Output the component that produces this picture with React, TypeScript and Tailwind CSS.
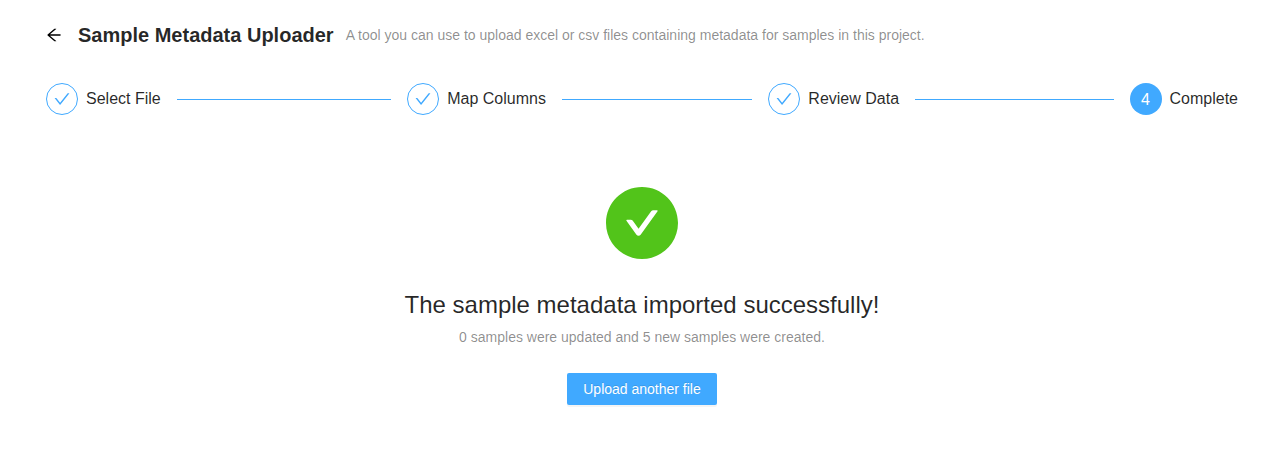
import React from "react";

const CHECK =
  "M912 190h-69.9c-9.8 0-19.1 4.5-25.1 12.2L404.7 724.5 207 474a32 32 0 0 0-25.1-12.2H112c-6.7 0-10.4 7.7-6.3 12.9l273.9 347c12.8 16.2 37.4 16.2 50.3 0l488.4-618.9c4.1-5.1.4-12.8-6.3-12.8z";
const ARROW =
  "M872 474H286.9l350.2-304c5.6-4.9 2.2-14-5.2-14h-88.5c-3.9 0-7.6 1.4-10.5 3.9L155 487.8a31.96 31.96 0 0 0 0 48.3L535.1 866c1.5 1.3 3.3 2 5.2 2h91.5c7.4 0 10.8-9.2 5.2-14L286.9 550H872c4.4 0 8-3.6 8-8v-60c0-4.4-3.6-8-8-8z";
const CHECK_CIRCLE =
  "M512 64C264.6 64 64 264.6 64 512s200.6 448 448 448 448-200.6 448-448S759.4 64 512 64zm193.5 301.7l-210.6 292a31.8 31.8 0 0 1-51.7 0L318.5 484.9c-3.8-5.3 0-12.9 6.5-12.9h46.9c10.2 0 19.9 4.9 25.9 13.3l71.2 98.8 157.2-218c6-8.3 15.6-13.3 25.9-13.3H699c6.5 0 10.3 7.6 6.5 12.9z";

type StepProps = { title: string; number: number; current?: boolean; last?: boolean };

function Step({ title, number, current = false, last = false }: StepProps) {
  return (
    <li className={last ? "flex flex-none items-center" : "mr-4 flex flex-1 items-center overflow-hidden"}>
      <span
        className={
          current
            ? "mr-2 flex size-8 shrink-0 items-center justify-center rounded-full bg-[#40a9ff] pt-0.5 text-base text-white"
            : "mr-2 flex size-8 shrink-0 items-center justify-center rounded-full border border-[#40a9ff] text-[#40a9ff]"
        }
      >
        {current ? (
          number
        ) : (
          <svg viewBox="64 64 896 896" className="size-4" fill="currentColor">
            <path d={CHECK} />
          </svg>
        )}
      </span>
      <span className="text-base leading-8 whitespace-nowrap">{title}</span>
      {!last && <span className="ml-4 h-px flex-1 bg-[#40a9ff]" />}
    </li>
  );
}

export default function App() {
  return (
    <main className="h-[463px] w-full bg-white font-['Liberation_Sans',Arial,sans-serif] text-sm text-black/85">
      <header className="flex items-center pt-[19px] pl-[46px]">
        <svg viewBox="64 64 896 896" className="mr-4 size-4 text-black" fill="currentColor">
          <path d={ARROW} />
        </svg>
        <h1 className="mr-3 text-xl leading-8 font-semibold">Sample Metadata Uploader</h1>
        <p className="leading-[22px] text-black/45">
          A tool you can use to upload excel or csv files containing metadata for samples in this project.
        </p>
      </header>
      <ol className="mt-8 mr-[45px] ml-[46px] flex">
        <Step title="Select File" number={1} />
        <Step title="Map Columns" number={2} />
        <Step title="Review Data" number={3} />
        <Step title="Complete" number={4} current last />
      </ol>
      <section className="flex flex-col items-center pt-[72px] pl-px">
        <svg viewBox="64 64 896 896" className="size-[72px] text-[#52c41a]" fill="currentColor">
          <path d={CHECK_CIRCLE} />
        </svg>
        <h2 className="mt-6 text-2xl leading-[43px]">The sample metadata imported successfully!</h2>
        <p className="leading-[22px] text-black/45">0 samples were updated and 5 new samples were created.</p>
        <button className="mt-[25px] h-8 rounded-[2px] bg-[#40a9ff] px-4 text-white shadow-[0_2px_0_rgba(0,0,0,0.045)] [text-shadow:0_-1px_0_rgba(0,0,0,0.12)]">
          Upload another file
        </button>
      </section>
    </main>
  );
}
